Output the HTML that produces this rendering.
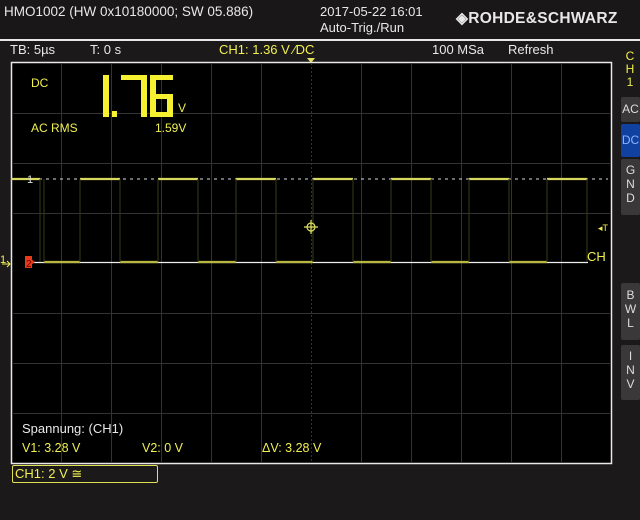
<!DOCTYPE html><html><head><style>
body{margin:0;width:640px;height:520px;background:#1c191a;overflow:hidden;font-family:"Liberation Sans",sans-serif;position:relative}
.t{position:absolute;white-space:nowrap;font-size:13px;color:#e8e8e8}
.y{color:#f0f050}
.btn{position:absolute;left:621px;width:19px;background:#3a3838;color:#ddd;font-size:12px;text-align:center;line-height:14px;border-radius:2px}
</style></head><body>
<div style="position:absolute;left:0;top:0;width:640px;height:39px;background:#1a1718"></div>
<div style="position:absolute;left:0;top:39px;width:640px;height:2px;background:#e8e8e8"></div>
<div class="t" style="left:4px;top:4px;font-size:13.5px">HMO1002 (HW 0x10180000; SW 05.886)</div>
<div class="t" style="left:320px;top:4px">2017-05-22 16:01</div>
<div class="t" style="left:320px;top:20px">Auto-Trig./Run</div>
<div class="t" style="left:456px;top:9px;font-weight:bold;font-size:15.5px;letter-spacing:0.3px">◈ROHDE&amp;SCHWARZ</div>
<div class="t" style="left:10px;top:42px">TB: 5µs</div>
<div class="t" style="left:90px;top:42px">T: 0 s</div>
<div class="t y" style="left:219px;top:42px">CH1: 1.36 V ⁄DC</div>
<div class="t" style="left:432px;top:42px">100 MSa</div>
<div class="t" style="left:508px;top:42px">Refresh</div>
<div class="t y" style="left:625px;top:50px;font-size:12px;line-height:13px;width:10px;text-align:center">C<br>H<br>1</div>
<div class="btn" style="top:97px;height:25px;line-height:25px">AC</div>
<div class="btn" style="top:124px;height:33px;line-height:33px;background:#1040a0;color:#8ab4ff">DC</div>
<div class="btn" style="top:159px;height:56px;padding-top:4px;box-sizing:border-box">G<br>N<br>D</div>
<div class="btn" style="top:283px;height:57px;padding-top:5px;box-sizing:border-box">B<br>W<br>L</div>
<div class="btn" style="top:345px;height:55px;padding-top:4px;box-sizing:border-box">I<br>N<br>V</div>
<svg style="position:absolute;left:0;top:0" width="640" height="520">
<rect x="11.5" y="62.5" width="600" height="401" fill="#000" stroke="#e8e8e8" stroke-width="1.5"/>
<g stroke="#333" stroke-width="1">
<path d="M61.5 63V463M111.5 63V463M161.5 63V463M211.5 63V463M261.5 63V463M361.5 63V463M411.5 63V463M461.5 63V463M511.5 63V463M561.5 63V463"/>
<path d="M12 113.5H611M12 163.5H611M12 213.5H611M12 313.5H611M12 363.5H611M12 413.5H611"/>
<path d="M311.5 63V463" stroke-dasharray="2 2"/>
</g>
<path d="M32 179H608" stroke="#ddd" stroke-dasharray="3 4"/>
<path d="M30 262.5H588" stroke="#eee" stroke-width="1.2"/>
<g stroke="#d8d860" stroke-width="2.2">
<path d="M11 179H40M80 179H120M158 179H198M236 179H276M313 179H353M391 179H431M469 179H509M547 179H587"/>
<path d="M44 262H80M120 262H158M198 262H236M276 262H313M353 262H391M431 262H469M509 262H547" stroke="#b8b840"/>
</g>
<g stroke="#3a3a18" stroke-width="1">
<path d="M40 179V262M44 179V262M80 179V262M120 179V262M158 179V262M198 179V262M236 179V262M276 179V262M313 179V262M353 179V262M391 179V262M431 179V262M469 179V262M509 179V262M547 179V262M587 179V262"/>
</g>
<g stroke="#e0e060" fill="none" stroke-width="1.2"><circle cx="311" cy="227" r="4"/><path d="M304 227H318M311 220V234"/></g>
<path d="M27 256L35 262L27 268Z" fill="#e83a1a"/><rect x="25" y="256" width="7" height="12" fill="#e83a1a"/>
<text x="26" y="267" font-size="10" fill="#600" font-family="Liberation Sans">2</text>
<text x="0" y="263" font-size="11" fill="#f0f050" font-family="Liberation Sans">1</text>
<path d="M2 264H10M7 261L10 264L7 267" stroke="#f0f050" fill="none"/>
<text x="27" y="183" font-size="11" fill="#ddd" font-family="Liberation Sans">1</text>
<text x="587" y="261" font-size="13" fill="#f0f050" font-family="Liberation Sans">CH</text>
<text x="598" y="231" font-size="9" fill="#f0f050" font-family="Liberation Sans">◂T</text>
<path d="M307 58H315L311 63Z" fill="#e0e060"/>
<g fill="#f5f030">
<rect x="103" y="75" width="6" height="42"/>
<rect x="112" y="111" width="5" height="6"/>
<rect x="121" y="75" width="26" height="5"/><rect x="141" y="75" width="6" height="42"/>
<rect x="150" y="75" width="23" height="5"/><rect x="150" y="75" width="6" height="42"/><rect x="150" y="94" width="23" height="5"/><rect x="150" y="112" width="23" height="5"/><rect x="167" y="94" width="6" height="23"/>
</g>
</svg>
<div class="t y" style="left:31px;top:76px;font-size:12px">DC</div>
<div class="t y" style="left:178px;top:101px;font-size:12px">V</div>
<div class="t y" style="left:31px;top:121px;font-size:12px">AC RMS</div>
<div class="t y" style="left:155px;top:121px;font-size:12px">1.59V</div>
<div class="t" style="left:22px;top:421px">Spannung: (CH1)</div>
<div class="t y" style="left:22px;top:441px;font-size:12.5px">V1: 3.28 V</div>
<div class="t y" style="left:142px;top:441px;font-size:12.5px">V2: 0 V</div>
<div class="t y" style="left:262px;top:441px;font-size:12.5px">ΔV: 3.28 V</div>
<div style="position:absolute;left:12px;top:465px;width:144px;height:16px;border:1px solid #e0e050;border-radius:2px"></div>
<div class="t y" style="left:15px;top:466px">CH1: 2 V ≅</div>
</body></html>
